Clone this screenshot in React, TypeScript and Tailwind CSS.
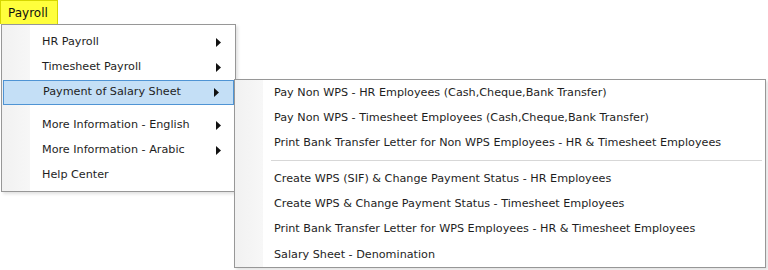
const mainItems: { label: string; arrow?: boolean; highlight?: boolean; sep?: boolean }[] = [
  { label: "HR Payroll", arrow: true },
  { label: "Timesheet Payroll", arrow: true },
  { label: "Payment of Salary Sheet", arrow: true, highlight: true },
  { label: "", sep: true },
  { label: "More Information - English", arrow: true },
  { label: "More Information - Arabic", arrow: true },
  { label: "Help Center" },
];

const subItems: { label: string; sep?: boolean }[] = [
  { label: "Pay Non WPS - HR Employees (Cash,Cheque,Bank Transfer)" },
  { label: "Pay Non WPS - Timesheet Employees (Cash,Cheque,Bank Transfer)" },
  { label: "Print Bank Transfer Letter for Non WPS Employees - HR & Timesheet Employees" },
  { label: "", sep: true },
  { label: "Create WPS (SIF) & Change Payment Status - HR Employees" },
  { label: "Create WPS & Change Payment Status - Timesheet Employees" },
  { label: "Print Bank Transfer Letter for WPS Employees - HR & Timesheet Employees" },
  { label: "Salary Sheet - Denomination" },
];

function Arrow() {
  return (
    <svg width="5" height="9" viewBox="0 0 5 9" className="shrink-0">
      <path d="M0 0 L5 4.5 L0 9 Z" fill="#111" />
    </svg>
  );
}

export default function App() {
  return (
    <div
      className="relative w-[768px] h-[270px] bg-white overflow-hidden text-[11.2px] text-[#1e1e1e]"
      style={{ fontFamily: "Tahoma, 'DejaVu Sans', Verdana, sans-serif" }}
    >
      {/* menu bar tab */}
      <div className="w-[58px] h-[24px] bg-[#ffff3c] border-t border-l border-r border-[#d6d600] pl-[7px] flex items-center text-[#111] text-[12px]">
        Payroll
      </div>

      {/* main dropdown */}
      <div className="ml-[1px] w-[235px] border border-[#979797] bg-white shadow-[2px_2px_3px_rgba(0,0,0,0.12)]">
        <div className="flex">
          <div className="w-[28px] bg-gradient-to-r from-[#f1f1f1] to-[#f7f7f7]" />
          <div className="flex-1 pt-[5px] pb-[3px]">
            {mainItems.map((it, i) =>
              it.sep ? (
                <div key={i} className="h-[8px] flex items-center pl-[8px] pr-[2px]">
                  <div className="w-full h-[1px] bg-[#d7d7d7] border-b border-white" />
                </div>
              ) : (
                <div
                  key={i}
                  className={`h-[25px] flex items-center pl-[12px] pr-[14px] ${
                    it.highlight
                      ? "-ml-[27px] pl-[39px] mr-[1px] bg-[#c4dff6] border border-[#4f94d4]"
                      : ""
                  }`}
                >
                  <span className="flex-1">{it.label}</span>
                  {it.arrow && <Arrow />}
                </div>
              )
            )}
          </div>
        </div>
      </div>

      {/* sub menu */}
      <div className="absolute left-[234px] top-[79px] w-[532px] border border-[#979797] bg-white shadow-[2px_2px_3px_rgba(0,0,0,0.12)] flex">
        <div className="w-[28px] bg-gradient-to-r from-[#f1f1f1] to-[#f7f7f7]" />
        <div className="flex-1">
          {subItems.map((it, i) =>
            it.sep ? (
              <div key={i} className="h-[10px] flex items-center pl-[8px] pr-[3px]">
                <div className="w-full h-[1px] bg-[#d7d7d7]" />
              </div>
            ) : (
              <div key={i} className="h-[25.3px] flex items-center pl-[11px] pt-[1px]">
                {it.label}
              </div>
            )
          )}
        </div>
      </div>
    </div>
  );
}
